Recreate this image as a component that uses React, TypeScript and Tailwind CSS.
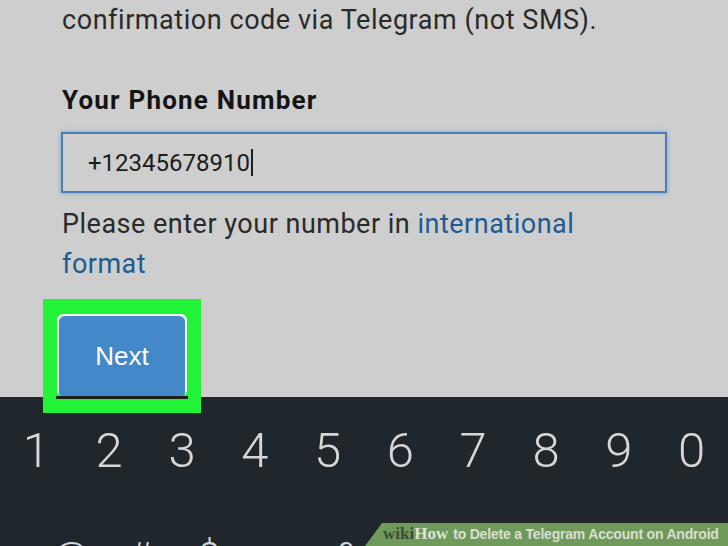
import React from "react";

const digits = ["1", "2", "3", "4", "5", "6", "7", "8", "9", "0"];
const symbols = ["@", "#", "$", "_", "&", "-", "+", "(", ")"];

export default function App() {
  return (
    <div className="relative w-[728px] h-[546px] overflow-hidden bg-[#1f262c] font-['Roboto',sans-serif]">
      {/* Light form area */}
      <div className="flex flex-col h-[397px] shrink-0 bg-[#cecece] pl-[62px]">
        <p className="shrink-0 text-[27px] leading-[40px] tracking-[0.55px] text-[#2a2a2a] whitespace-nowrap">
          confirmation code via Telegram (not SMS).
        </p>
        <h2 className="shrink-0 mt-[44px] text-[26px] leading-[32px] tracking-[1.2px] font-bold text-[#141414] whitespace-nowrap">
          Your Phone Number
        </h2>
        <div className="shrink-0 mt-[16px] -ml-px w-[606px] h-[61px] flex items-center pl-[25px] border-2 border-[#4a7fb6] shadow-[0_0_5px_rgba(74,128,184,0.55)]">
          <span className="text-[24px] text-[#1c1c1c]">+12345678910</span>
          <span className="w-[2px] h-[27px] bg-[#1c1c1c] ml-px" />
        </div>
        <p className="shrink-0 mt-[11px] text-[27px] leading-[40px] tracking-[0.5px] text-[#2a2a2a] w-[580px]">
          Please enter your number in{" "}
          <span className="text-[#1e5a93]">international format</span>
        </p>
        <div className="shrink-0 relative z-10 mt-[15px] -ml-[19px] w-[158px] h-[114px] bg-[#22f337] pl-[14px] pt-[15px] pr-[14px] pb-[14px] flex flex-col">
          <div className="flex-1 rounded-[6px] bg-[#f4f8f4] p-[2px] pb-0">
            <div className="h-full rounded-t-[6px] rounded-b-[3px] bg-[#4388c8] flex items-center justify-center">
              <span className="text-[26px] text-white font-['Liberation_Sans',sans-serif]">Next</span>
            </div>
          </div>
          <div className="h-[3px] shrink-0 bg-[#202020] -mx-[1px]" />
        </div>
      </div>

      {/* Keyboard */}
      <div className="grid grid-cols-10 mt-[16px]">
        {digits.map((d) => (
          <div key={d} className="flex justify-center text-[49px] leading-[76px] font-light text-[#d6d6d6]">
            {d}
          </div>
        ))}
      </div>
      <div className="grid grid-cols-10 pl-[36px] mt-[49px]">
        {symbols.map((s) => (
          <div key={s} className="flex justify-center text-[40px] leading-[40px] font-light text-[#d6d6d6]">
            {s}
          </div>
        ))}
      </div>

      {/* wikiHow banner */}
      <div className="absolute right-0 bottom-0 w-[363px] h-[23px] bg-[#6f9a5b] [clip-path:polygon(17px_0,100%_0,100%_100%,0_100%)] flex items-end pl-[18px] pb-[3px] whitespace-nowrap">
        <span className="font-['Liberation_Serif',serif] font-bold text-[17px] leading-[18px] text-[#3c4d35]">wiki</span>
        <span className="font-['Liberation_Serif',serif] font-bold text-[17px] leading-[18px] text-[#dde5d6]">How</span>
        <span className="ml-[5px] font-['Liberation_Sans',sans-serif] font-bold text-[14px] leading-[18px] text-[#d9dfd3] tracking-[-0.2px]">
          to Delete a Telegram Account on Android
        </span>
      </div>
    </div>
  );
}
